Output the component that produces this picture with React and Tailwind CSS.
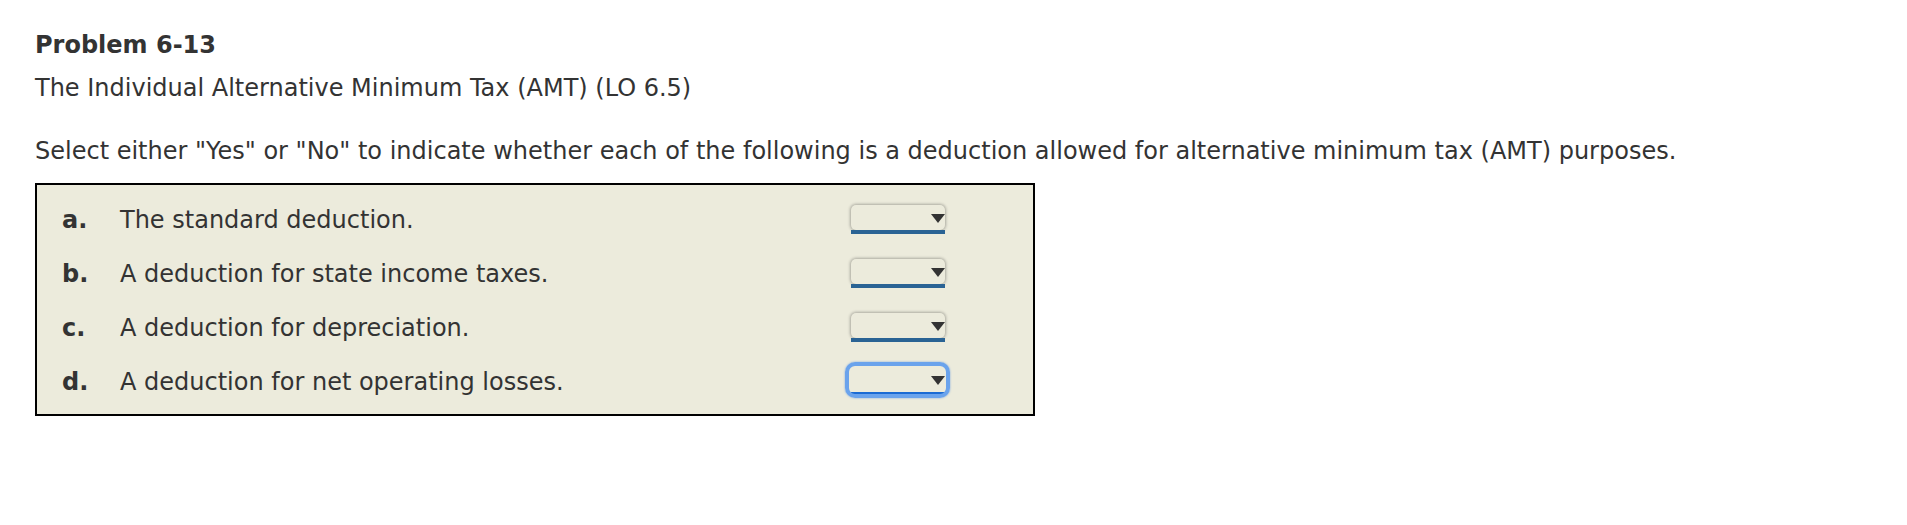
const rows = [
  { key: 'a', text: 'The standard deduction.' },
  { key: 'b', text: 'A deduction for state income taxes.' },
  { key: 'c', text: 'A deduction for depreciation.' },
  { key: 'd', text: 'A deduction for net operating losses.', focused: true },
];

function Dropdown({ focused }) {
  return (
    <div className="relative w-[94px] h-[29px]">
      {focused && (
        <div className="absolute -left-[6px] -right-[5px] -top-[5px] -bottom-[2px] rounded-[10px] border-[4px] border-[#6aa3ec] shadow-[0_0_2px_rgba(60,130,230,0.7)]" />
      )}
      <div
        className={
          focused
            ? 'h-[25px] rounded-t-[5px] bg-[#ecebdc]'
            : 'h-[25px] rounded-[5px] bg-[#ecebdc] shadow-[0_0_3px_1px_rgba(0,0,0,0.28)]'
        }
      />
      <div className={focused ? 'h-[4px] bg-[#1b6bd3]' : 'h-[4px] bg-[#2a6394]'} />
      <svg className="absolute right-0 top-[9px]" width="14" height="9" viewBox="0 0 14 9">
        <path d="M0 0 H14 L7 9 Z" fill="#333" />
      </svg>
    </div>
  );
}

export default function App() {
  return (
    <div className="min-h-screen bg-white pl-[35px] pt-[31px] text-[#333] text-[24px] leading-[28px] font-['Verdana','DejaVu_Sans',sans-serif]">
      <h2 className="font-bold">Problem 6-13</h2>
      <p className="mt-[15px]">The Individual Alternative Minimum Tax (AMT) (LO 6.5)</p>
      <p className="mt-[35px]">
        Select either "Yes" or "No" to indicate whether each of the following is a deduction allowed for alternative minimum tax (AMT) purposes.
      </p>

      <div className="mt-[18px] w-[1000px] border-2 border-black bg-[#ecebdc] pl-[25px] pt-[20px] pb-[18px] flex flex-col gap-[25px]">
        {rows.map((r) => (
          <div key={r.key} className="flex items-center h-[29px]">
            <span className="w-[58px] font-bold">{r.key}.</span>
            <span className="w-[731px]">{r.text}</span>
            <Dropdown focused={r.focused} />
          </div>
        ))}
      </div>
    </div>
  );
}
